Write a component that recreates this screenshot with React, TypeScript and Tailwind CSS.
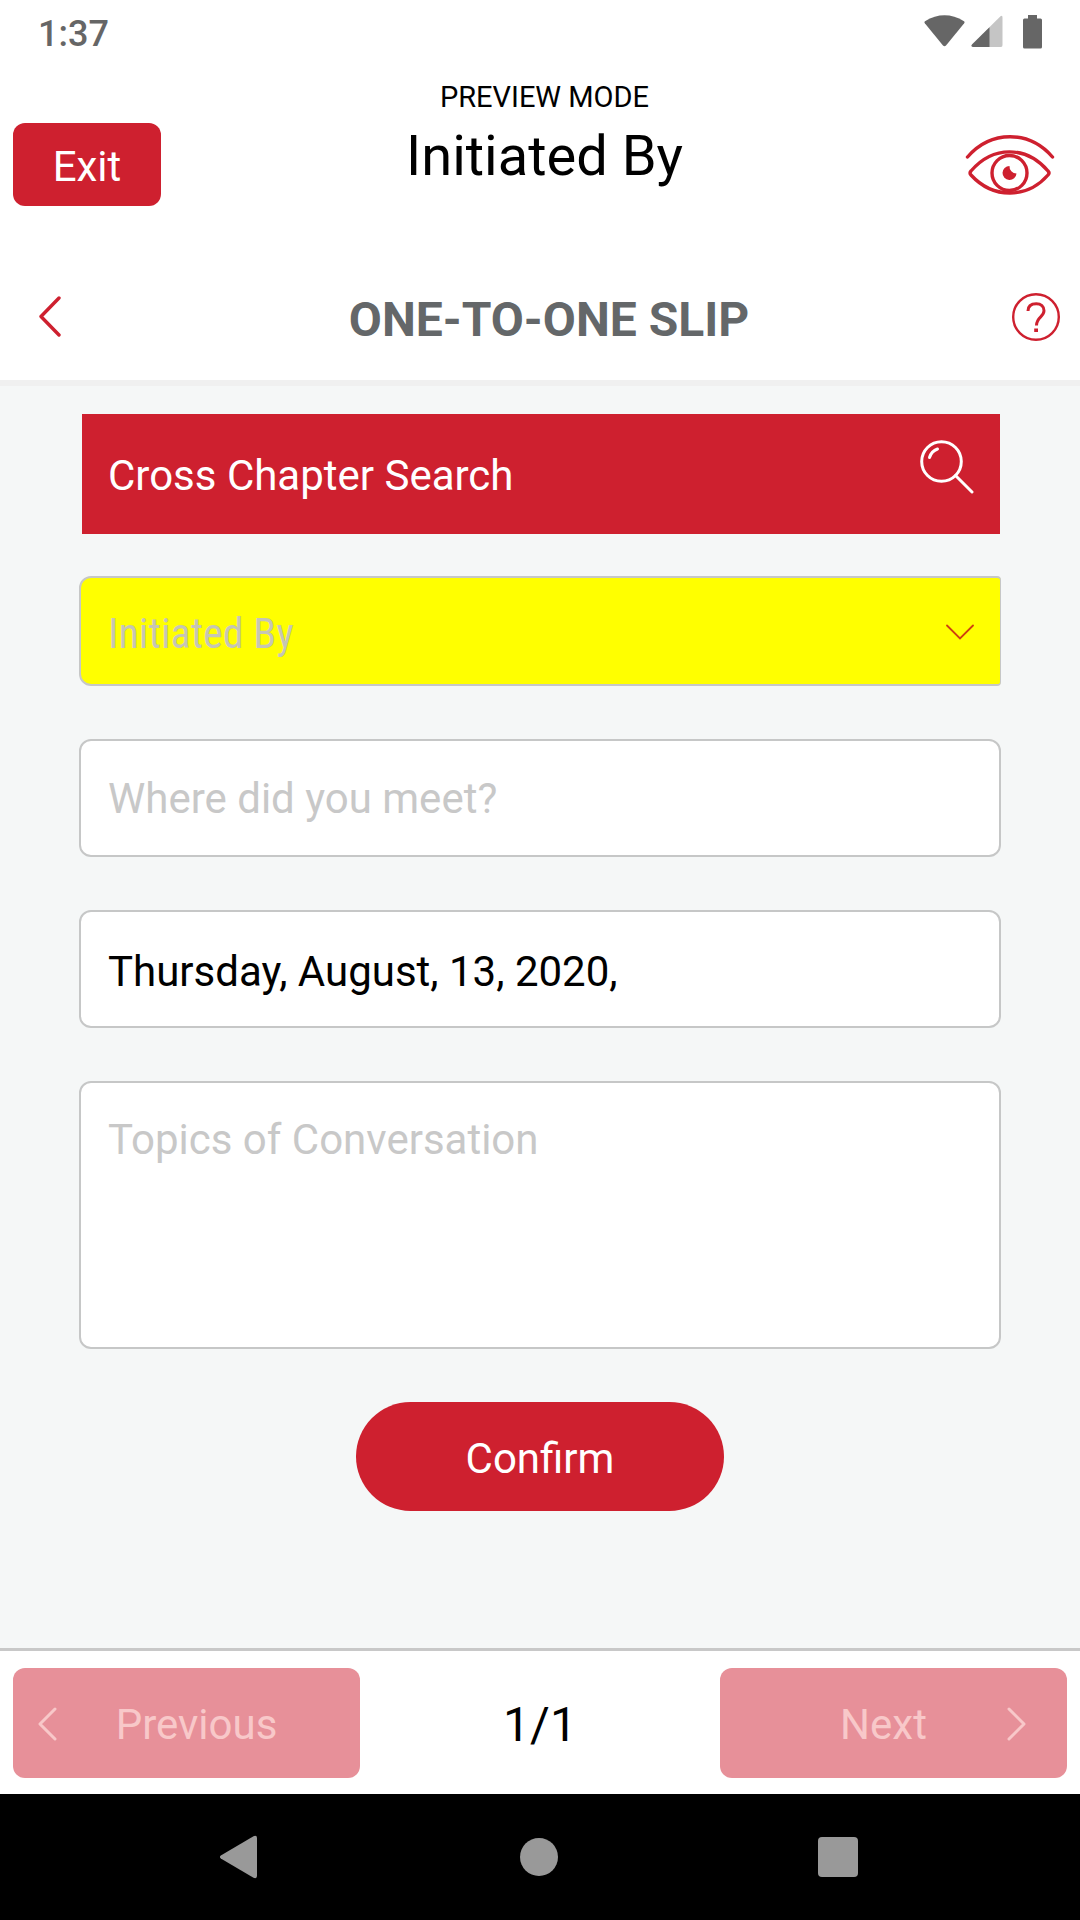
import { useState } from "react"

const FIELD =
  "block w-full rounded-xl border-2 border-[#c6c7c7] bg-white px-[27px] text-[42px] leading-[48px] text-black outline-none placeholder:text-[#c8c8c8] placeholder:opacity-100"

function StatusBar() {
  return (
    <div className="flex h-14 items-center justify-between px-[38px] pt-2">
      <span className="pt-1 text-[36px] leading-[44px] font-medium text-[#666666]">1:37</span>
      <div className="flex items-center gap-1.5 text-[#666666]">
        <svg width="41" height="34" viewBox="0 0 41 34" fill="currentColor" aria-hidden="true">
          <path d="M1 6.200Q20.500-5.500 40 6.200Q41 7 40.200 8.200L22 30.500Q20.500 32 19 30.500L.8 8.200Q0 7 1 6.200Z" />
        </svg>
        <svg width="32" height="34" viewBox="0 0 32 34" fill="currentColor" aria-hidden="true">
          <path d="M1 29.500L29.500 1.300Q31.500 0 31.500 2.500V30Q31.500 32 30 32H2Q-.5 31.500 1 29.500Z" opacity=".38" />
          <path d="M1 29.500L18.500 12.200V32H2Q-.5 31.500 1 29.500Z" />
        </svg>
        <svg className="ml-3.5" width="19" height="34" viewBox="0 0 19 34" fill="currentColor" aria-hidden="true">
          <path d="M5 0H14V3.500H17.500Q19 3.500 19 5V32Q19 33.500 17.500 33.500H1.500Q0 33.500 0 32V5Q0 3.500 1.500 3.500H5Z" />
        </svg>
      </div>
    </div>
  )
}

function EyeIcon() {
  return (
    <svg width="90" height="62" viewBox="0 0 90 62" fill="none" stroke="currentColor" strokeWidth="3.400" strokeLinecap="round" aria-hidden="true">
      <path d="M2.500 23C26-4 64-4 87.500 23" />
      <path d="M6 37C28 11.500 61 11.500 83 37Q85 39 83 41C62 65 28 65 6 41Q4 39 6 37Z" />
      <circle cx="44.500" cy="39" r="17.500" />
      <path d="M44.500 32A7 7 0 1 0 51.500 39.500A7 7 0 0 1 44.500 32Z" fill="currentColor" stroke="none" />
    </svg>
  )
}

function Chevron({ flip = false }: { flip?: boolean }) {
  return (
    <svg width="20" height="34" viewBox="0 0 20 34" fill="none" stroke="currentColor" strokeWidth="3" strokeLinecap="round" strokeLinejoin="round" aria-hidden="true">
      <path d={flip ? "M2 2L17 17L2 32" : "M18 2L3 17L18 32"} />
    </svg>
  )
}

function PreviewHeader() {
  return (
    <header className="grid grid-cols-[1fr_auto_1fr] items-start pr-1 pl-[13px] pt-6 pb-[43px]">
      <button className="mt-[43px] h-[83px] w-[148px] rounded-xl bg-[#ce202f] pt-1 text-[42px] leading-[48px] text-white">
        Exit
      </button>
      <div className="text-center text-black">
        <p className="text-[29px] leading-[34px]">PREVIEW MODE</p>
        <h1 className="pt-0.5 text-[56px] leading-[80px]">Initiated By</h1>
      </div>
      <button aria-label="Preview" className="mt-[54px] mr-[21px] justify-self-end text-[#ce202f]">
        <EyeIcon />
      </button>
    </header>
  )
}

function SlipBar() {
  return (
    <div className="grid h-[137px] grid-cols-[1fr_auto_1fr] items-center border-b-[6px] border-[#f0f0f0] pt-1 pl-[38px] pr-5">
      <button aria-label="Back" className="justify-self-start text-[#ce202f]">
        <svg width="24" height="42" viewBox="0 0 24 42" fill="none" stroke="currentColor" strokeWidth="3.400" strokeLinecap="round" strokeLinejoin="round" aria-hidden="true">
          <path d="M21 2L3 20.500L21 39" />
        </svg>
      </button>
      <h2 className="pt-1.5 text-[48px] leading-[56px] font-bold text-[#646769]">ONE-TO-ONE SLIP</h2>
      <button aria-label="Help" className="justify-self-end text-[#ce202f]">
        <svg width="48" height="48" viewBox="0 0 48 48" fill="none" stroke="currentColor" strokeWidth="2.400" aria-hidden="true">
          <circle cx="24" cy="24" r="22.800" />
          <path d="M16 18C16 13 19.500 10.800 24.300 10.800C29 10.800 32 13.500 32 17.800C32 24 24.500 24 24.500 32.500" strokeWidth="3" />
          <path d="M22.200 35.500H26V39H22.200Z" fill="currentColor" stroke="none" />
        </svg>
      </button>
    </div>
  )
}

function SlipForm() {
  const [date, setDate] = useState("Thursday, August, 13, 2020,")

  return (
    <form className="flex flex-col px-[79px] pt-7" onSubmit={(e) => e.preventDefault()}>
      <button type="button" className="mr-px ml-[3px] flex h-[120px] items-start justify-between bg-[#ce202f] px-[26px] pt-[26px] text-white">
        <span className="pt-3 text-[42px] leading-[48px]">Cross Chapter Search</span>
        <svg width="54" height="54" viewBox="0 0 54 54" fill="none" stroke="currentColor" strokeWidth="3" strokeLinecap="round" aria-hidden="true">
          <circle cx="21.500" cy="21.500" r="19.800" />
          <path d="M35.500 35.500L52 52" />
          <path d="M9.500 17.500Q11.500 11 17.500 9" />
        </svg>
      </button>

      <div className="relative mt-[42px]">
        <select
          aria-label="Initiated By"
          defaultValue=""
          className="block h-[110px] w-full appearance-none rounded-l-xl rounded-r-sm border-2 border-r border-[#c6c7c7] bg-[#ffff00] px-[27px] pt-1.5 font-['Roboto_Condensed','Roboto',sans-serif] text-[42px] leading-[48px] text-[#c6c6b4] opacity-100 outline-none"
        >
          <option value="">Initiated By</option>
        </select>
        <svg className="pointer-events-none absolute top-12 right-[27px] text-[#ce4010]" width="28" height="16" viewBox="0 0 28 16" fill="none" stroke="currentColor" strokeWidth="1.800" strokeLinecap="round" aria-hidden="true">
          <path d="M1 1.500L14 14.500L27 1.500" />
        </svg>
      </div>

      <div className="mt-[53px] flex flex-col gap-[53px]">
        <input aria-label="Where did you meet?" placeholder="Where did you meet?" className={`${FIELD} h-[118px]`} />
        <input aria-label="Date" value={date} onChange={(e) => setDate(e.target.value)} className={`${FIELD} h-[118px] pt-1`} />
        <textarea
          aria-label="Topics of Conversation"
          placeholder="Topics of Conversation"
          className={`${FIELD} h-[268px] resize-none pt-[33px]`}
        />
        <button type="submit" className="h-[109px] w-[368px] self-center rounded-full bg-[#ce202f] pt-1 text-[42px] leading-[48px] text-white">
          Confirm
        </button>
      </div>
    </form>
  )
}

function Pager() {
  return (
    <footer className="flex items-center justify-between border-t-[3px] border-[#c8c8c8] bg-white px-[13px] pt-[17px] pb-4 text-[42px] leading-[48px]">
      <button disabled className="flex h-[110px] w-[347px] items-center rounded-xl bg-[#e79099] px-6 pt-0.5 text-[#f8c8c9]">
        <Chevron />
        <span className="flex-1 pt-0.5">Previous</span>
      </button>
      <span className="pt-1 text-[48px] text-black">1/1</span>
      <button disabled className="flex h-[110px] w-[347px] items-center rounded-xl bg-[#e79099] pt-0.5 pl-10 pr-10 text-[#f8c8c9]">
        <span className="flex-1 pt-0.5">Next</span>
        <Chevron flip />
      </button>
    </footer>
  )
}

function SystemNav() {
  return (
    <nav className="flex h-[126px] items-center justify-between bg-black pr-[222px] pl-[219px] text-[#999999]">
      <button aria-label="System back">
        <svg width="40" height="44" viewBox="0 0 40 44" fill="currentColor" aria-hidden="true">
          <path d="M1.800 20.500L34.500 1.200Q38 0 38 3V41Q38 44 34.500 42.800L1.800 23.500Q0 22 1.800 20.500Z" />
        </svg>
      </button>
      <button aria-label="Home" className="size-[38px] rounded-full bg-[#999999]" />
      <button aria-label="Recent apps" className="size-10 rounded-sm bg-[#999999]" />
    </nav>
  )
}

export default function App() {
  return (
    <div className="flex min-h-screen flex-col bg-white font-['Roboto',sans-serif]">
      <StatusBar />
      <PreviewHeader />
      <SlipBar />
      <main className="flex-1 bg-[#f5f7f7]">
        <SlipForm />
      </main>
      <Pager />
      <SystemNav />
    </div>
  )
}
